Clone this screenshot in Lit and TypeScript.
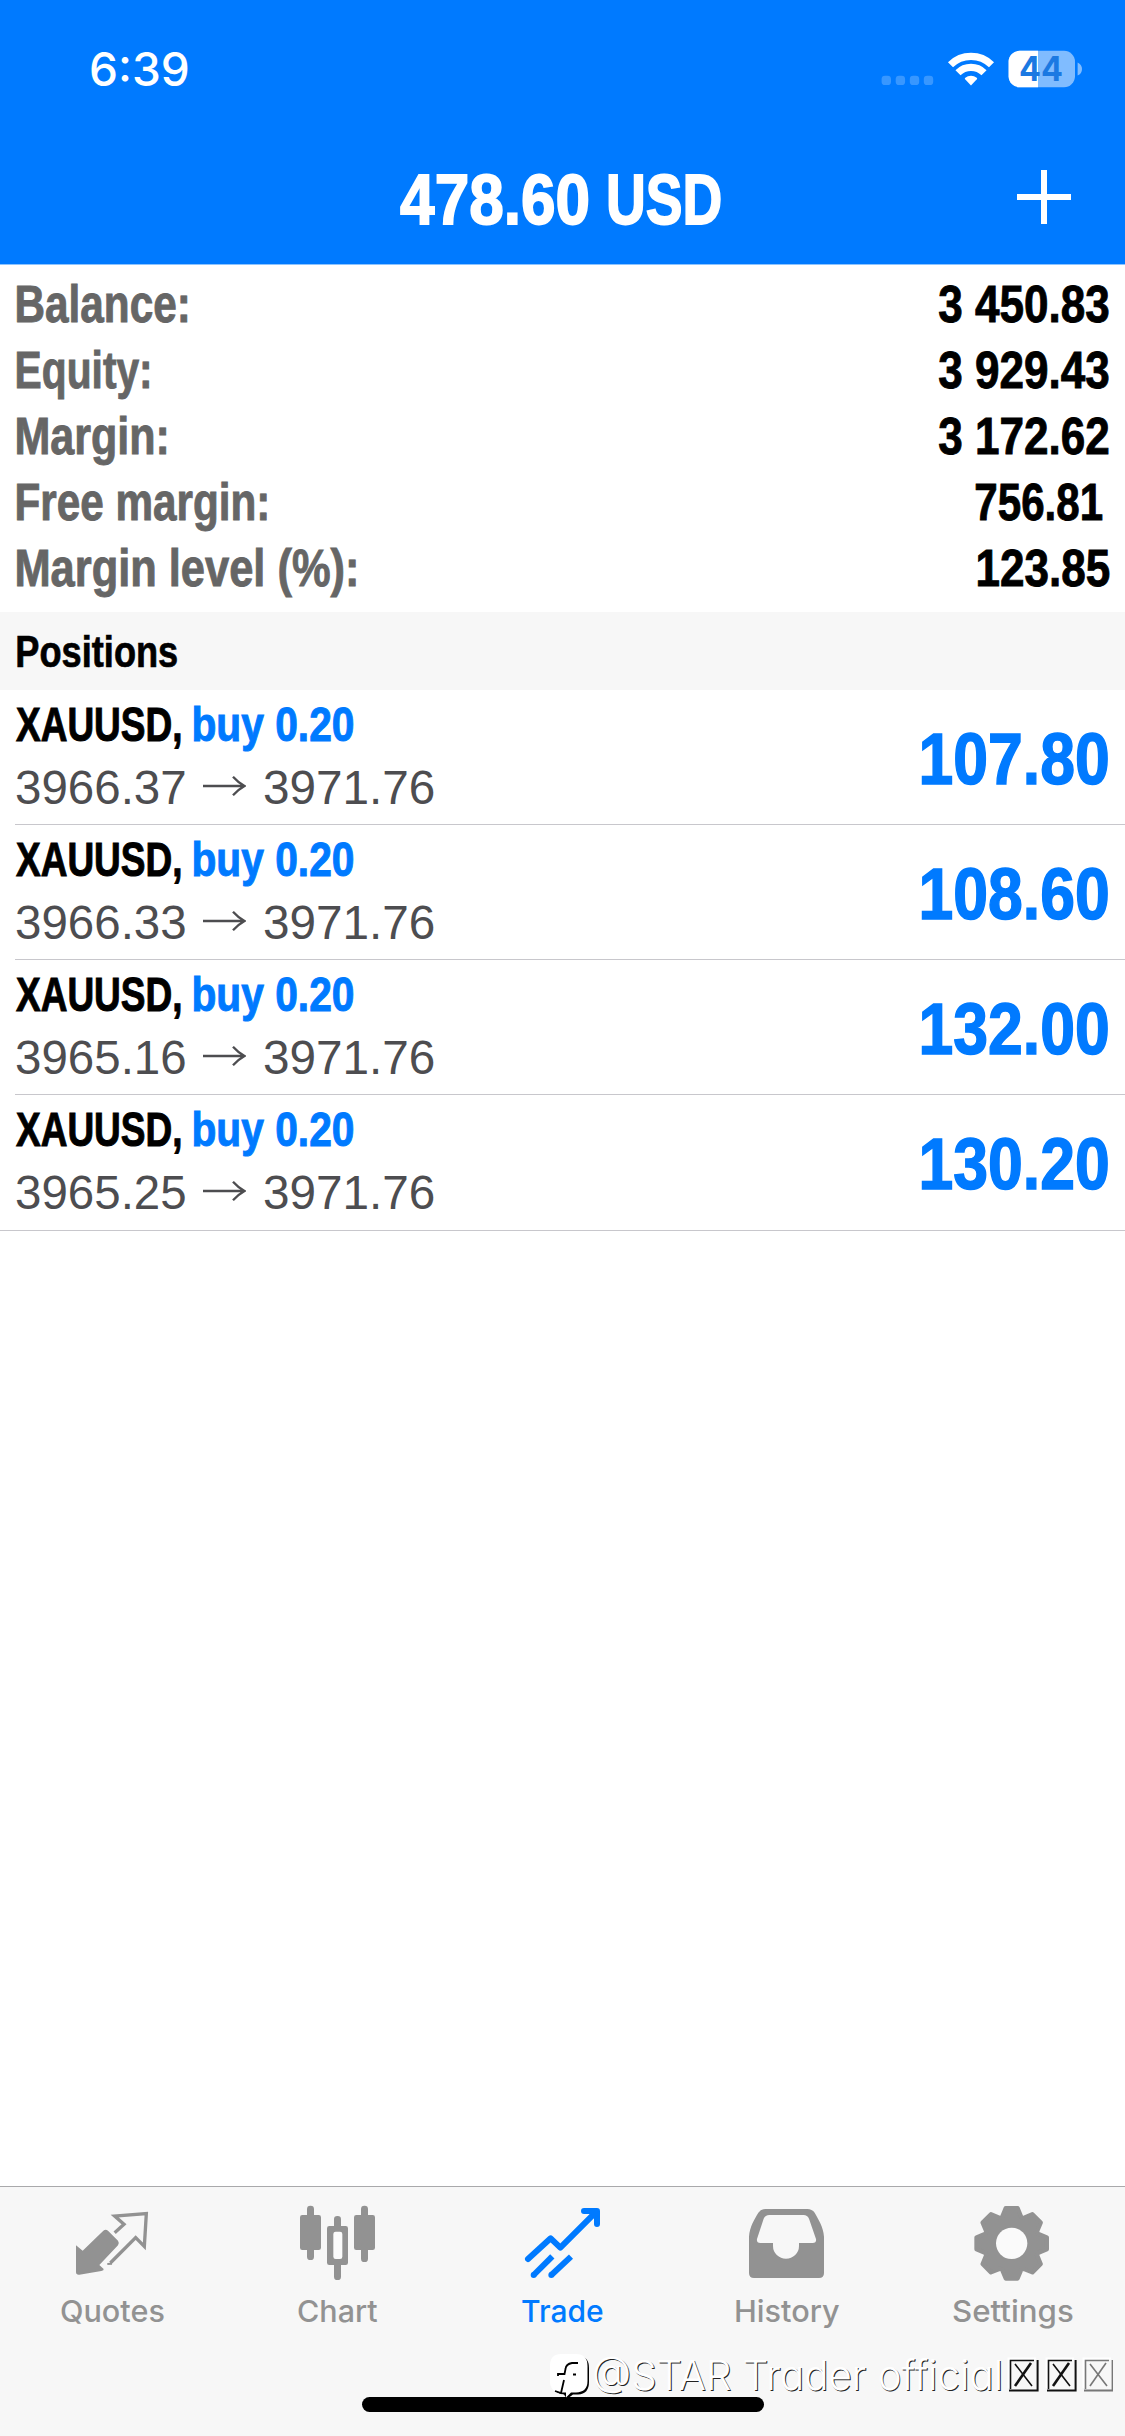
import { LitElement, html, svg, css } from "lit";
import { customElement, property } from "lit/decorators.js";

/** A single run of text, condensed so that its ink spans exactly `w` pixels. */
@customElement("fit-text")
class FitText extends LitElement {
  @property() text = "";
  @property({ type: Number }) w = 100;

  static styles = css`
    :host { display: inline-block; flex: none; white-space: pre; }
    .run { display: inline-block; transform-origin: 0 50%; }
  `;

  updated() {
    const run = this.renderRoot.querySelector(".run") as HTMLElement;
    const cs = getComputedStyle(run);
    const ctx = document.createElement("canvas").getContext("2d")!;
    ctx.font = `${cs.fontWeight} ${cs.fontSize} ${cs.fontFamily}`;
    const m = ctx.measureText(this.text);
    const left = -m.actualBoundingBoxLeft;
    const s = this.w / (m.actualBoundingBoxRight - left);
    run.style.transform = `translateX(${-left * s}px) scaleX(${s})`;
    this.style.width = `${this.w}px`;
  }

  render() {
    return html`<span class="run">${this.text}</span>`;
  }
}

const summary = [
  { label: "Balance:", lw: 170.5, value: "3 450.83", vw: 169.5 },
  { label: "Equity:", lw: 132.5, value: "3 929.43", vw: 169.5 },
  { label: "Margin:", lw: 149.5, value: "3 172.62", vw: 169.5 },
  { label: "Free margin:", lw: 250, value: "756.81", vw: 126, narrow: true },
  { label: "Margin level (%):", lw: 339, value: "123.85", vw: 131 },
];

const positions = [
  { open: "3966.37", now: "3971.76", profit: "107.80" },
  { open: "3966.33", now: "3971.76", profit: "108.60" },
  { open: "3965.16", now: "3971.76", profit: "132.00" },
  { open: "3965.25", now: "3971.76", profit: "130.20" },
];

const gearPath = () => {
  const pts: string[] = [];
  for (let k = 0; k < 8; k++) {
    for (const [r, d] of [[84, -20], [107, -9.5], [107, 9.5], [84, 20]]) {
      const a = ((k * 45 + d) * Math.PI) / 180;
      pts.push(`${(935 + r * Math.sin(a)).toFixed(1)} ${(220 - r * Math.cos(a)).toFixed(1)}`);
    }
  }
  return `M${pts.join("L")}Z`;
};

const tabs = [
  {
    label: "Quotes", w: 102.7, box: "0 78 675 270",
    icon: svg`
      <path fill="currentColor" d="M228 226L248 242L310 182Q317 176 324 182L354 212Q359 219 354 226L298 285L311 297Q312 302 304 303L238 314Q228 315 228 306Z"/>
      <path fill="none" stroke="currentColor" stroke-width="10" d="M344 188L372 163L344 138L439 131L433 229L407 203L331 279"/>
      <path stroke="currentColor" stroke-width="6" d="M322 282L336 281"/>`,
  },
  {
    label: "Chart", w: 79.4, box: "675 78 675 270",
    icon: svg`<g fill="currentColor">
      <rect x="900" y="135" width="63" height="105" rx="7"/><rect x="921" y="107" width="21" height="163" rx="10"/>
      <rect x="1062" y="135" width="63" height="105" rx="7"/><rect x="1083" y="107" width="21" height="169" rx="10"/>
      <rect x="981" y="168" width="63" height="117" rx="7"/><rect x="1002" y="138" width="21" height="192" rx="10"/></g>
      <rect x="1000" y="185" width="27" height="82" rx="7" fill="#fbfbfb"/>`,
  },
  {
    label: "Trade", w: 81, box: "150 78 675 270", active: true,
    icon: svg`<g fill="none" stroke="currentColor" stroke-width="18" stroke-linejoin="round" stroke-linecap="round">
      <path d="M384 267L452 205L481 233L586 128"/><path d="M552 123H591V162"/></g>
      <path fill="currentColor" d="M562 126L590 126V154Z"/>
      <g fill="currentColor"><circle cx="401" cy="315" r="9"/><circle cx="454" cy="315" r="9"/></g>
      <g stroke="currentColor" stroke-width="18"><path d="M401 315L457 259"/><path d="M454 315L513 260"/></g>`,
  },
  {
    label: "History", w: 103.4, box: "-75 78 675 270",
    icon: svg`<path fill="currentColor" fill-rule="evenodd" d="M147 200C149 170 163 148 175 128Q182 117 196 117H322Q336 117 344 128C355 148 370 170 372 200V309Q372 324 357 324H162Q147 324 147 309Z
      M208 135H311Q322 135 327 146L348 207Q350 219 338 219H297V228A39 38 0 0 1 219 228V219H181Q169 219 171 207L191 146Q196 135 208 135Z"/>`,
  },
  {
    label: "Settings", w: 119.6, box: "600 78 675 270",
    icon: svg`<path fill="currentColor" stroke="currentColor" stroke-width="13" stroke-linejoin="round" d=${gearPath()}/>
      <circle cx="935" cy="220" r="47" fill="#fafafa"/>`,
  },
];

@customElement("app-root")
class AppRoot extends LitElement {
  static styles = css`
    :host {
      display: flex; flex-direction: column; position: relative; overflow: hidden;
      width: 1125px; height: 2436px; background: #fff; color: #000;
      font-family: "Liberation Sans", Arial, sans-serif; font-weight: 700;
    }
    svg { display: block; flex: none; }
    .header { height: 264px; background: #007aff; color: #fff; border-bottom: 1px solid #8cc4ff; }
    .status { display: flex; height: 81px; padding: 46px 43px 0 91.4px; }
    .time { font: 500 46px/46px Inter, sans-serif; margin-right: auto; }
    .indicators { margin-top: 4px; }
    .nav { display: grid; grid-template-columns: 1fr auto 1fr; align-items: center; height: 129px; padding: 8px 54px 0 51px; }
    .title { grid-column: 2; display: flex; gap: 20.6px; font-size: 71px; line-height: 72px; -webkit-text-stroke: 1.8px currentColor; }
    .add { justify-self: end; margin-bottom: 5px; }
    .summary { padding: 7px 16.5px 10px 17px; font-size: 51px; line-height: 66px; -webkit-text-stroke: 0.9px currentColor; }
    .row { display: flex; justify-content: space-between; height: 66px; }
    .label { color: #666; }
    .narrow { margin-right: 6.5px; }
    .section { height: 77px; padding: 1px 0 0 17px; background: #f7f7f7; font-size: 44px; line-height: 77px; -webkit-text-stroke: 0.7px currentColor; }
    .position { display: flex; justify-content: space-between; height: 134px; margin-left: 15px; padding-right: 16.6px; border-bottom: 1px solid #c8c7cc; }
    .position.last { height: 135px; margin-left: 0; padding-left: 15px; }
    .info { padding-top: 4px; font-size: 48px; }
    .line { display: flex; height: 62px; line-height: 62px; padding-left: 0.8px; -webkit-text-stroke: 1px currentColor; }
    .symbol { margin-right: 13.7px; }
    .side, .profit { color: #007aff; }
    .line.prices { font-weight: 400; color: #4d4d50; padding-top: 1px; -webkit-text-stroke: 0; }
    .arrow { margin: 0 17.6px 0 18.7px; }
    .profit { font-size: 72px; line-height: 134px; padding-top: 1.5px; height: 130px; -webkit-text-stroke: 1.5px currentColor; }
    .spacer { flex: 1; }
    .tabs { display: grid; grid-template-columns: repeat(5, 1fr); height: 249px; background: #f7f7f7; border-top: 1px solid #a9a9ab; }
    .tab { display: flex; flex-direction: column; align-items: center; padding-top: 9px; color: #929292; font: 500 30px/36px Inter, sans-serif; }
    .tab fit-text { margin-top: 7px; }
    .tab.active { color: #007aff; }
    .home { position: absolute; left: 362px; top: 2397px; width: 402px; height: 15px; border-radius: 8px; background: #000; }
    .mark { position: absolute; left: 550px; top: 2350px; display: flex; height: 50px; color: #fff; font: 300 41px/50px Inter, sans-serif; font-feature-settings: "cv11" 1; text-shadow: 1px 1px 0 #222; }
    .handle { margin: -0.5px 4px 0; }
    .boxes { margin-left: 0; }
  `;

  render() {
    return html`
      <div class="header">
        <div class="status">
          <fit-text class="time" text="6:39" w="96.8"></fit-text>
          <svg class="indicators" width="201" height="38" viewBox="881 50 201 38">
            ${[881.6, 895.7, 909.8, 923.8].map((x) => svg`<rect x=${x} y="75.7" width="9.4" height="9.4" rx="3.4" fill="#fff" fill-opacity=".22"/>`)}
            <g fill="none" stroke="#fff" stroke-width="7.2">
              <path d="M950.5 64.7A29.3 29.3 0 0 1 991.5 64.7"/>
              <path d="M958 72.7A18.4 18.4 0 0 1 984 72.7"/>
            </g>
            <path fill="#fff" d="M971 85.4L964.9 79.1Q964.6 78.3 965.3 77.7A9 9 0 0 1 976.7 77.7Q977.4 78.3 977.1 79.1Z"/>
            <rect x="1008.6" y="50.8" width="66.4" height="36.4" rx="11" fill="#80bcff"/>
            <path fill="#fff" d="M1038 50.8H1019.6A11 11 0 0 0 1008.6 61.8V76.2A11 11 0 0 0 1019.6 87.2H1038Z"/>
            <path fill="#80bcff" d="M1077.6 62.4Q1082 64.5 1082 69T1077.6 75.6Z"/>
            <text x="1019" y="81.3" textLength="44" lengthAdjust="spacingAndGlyphs" font-family="Inter, sans-serif" font-weight="700" font-size="34" fill="#1b79e2">44</text>
          </svg>
        </div>
        <div class="nav">
          <div class="title">
            <fit-text text="478.60" w="187"></fit-text>
            <fit-text text="USD" w="111.5"></fit-text>
          </div>
          <svg class="add" width="54" height="54" viewBox="0 0 54 54"><path stroke="#fff" stroke-width="6" d="M0 27H54M27 0V54"/></svg>
        </div>
      </div>

      <div class="summary">
        ${summary.map((r) => html`<div class="row">
          <fit-text class="label" text=${r.label} w=${r.lw}></fit-text>
          <fit-text class=${r.narrow ? "narrow" : ""} text=${r.value} w=${r.vw}></fit-text>
        </div>`)}
      </div>

      <div class="section"><fit-text text="Positions" w="160"></fit-text></div>

      ${positions.map((p, i) => html`<div class="position ${i === positions.length - 1 ? "last" : ""}">
        <div class="info">
          <div class="line">
            <fit-text class="symbol" text="XAUUSD," w="164.7"></fit-text>
            <fit-text class="side" text="buy 0.20" w="159"></fit-text>
          </div>
          <div class="line prices">
            <fit-text text=${p.open} w="169"></fit-text>
            <svg class="arrow" width="43" height="62" viewBox="0 0 43 62"><path fill="none" stroke="#4d4d50" stroke-width="2.3" d="M0 29H41.5M30 19.8Q34.5 25 41.5 29Q34.5 33 30 38.2"/></svg>
            <fit-text text=${p.now} w="169.7"></fit-text>
          </div>
        </div>
        <fit-text class="profit" text=${p.profit} w="186"></fit-text>
      </div>`)}

      <div class="spacer"></div>

      <div class="tabs">
        ${tabs.map((t) => html`<div class="tab ${t.active ? "active" : ""}">
          <svg width="225" height="90" viewBox=${t.box}>${t.icon}</svg>
          <fit-text text=${t.label} w=${t.w}></fit-text>
        </div>`)}
      </div>

      <div class="home"></div>
      <div class="mark">
        <svg width="40" height="50" viewBox="0 0 40 50">
          <path fill="#000" d="M15 6H28Q39 6 39 18V32Q39 44 28 44.5H23L17 49L14 44.5Q4 43 3 36V18Q3 6 15 6Z"/>
          <path fill="#fff" d="M11 4H26Q37.5 4 37.5 16V31Q37.5 42 26 42.5H21L16 47.5V42.5H11Q0 42 0 31V16Q0 4 11 4Z"/>
          <path fill="none" stroke="#000" stroke-width="1.8" d="M28 13H22Q16 14 15.5 19L14.5 24H8V26M14 30L11 43L5 41"/>
          <path stroke="#000" stroke-width="2" d="M23 24.5H26"/>
        </svg>
        <fit-text class="handle" text="@STAR Trader official" w="403"></fit-text>
        <svg class="boxes" width="112" height="50" viewBox="1001 0 112 50">
          ${[1009, 1047, 1084].map((x, i) => svg`
            <path fill="none" stroke="#fff" stroke-width="2" d="M${x - 0.5} 38V8.5H${x + 27}"/>
            <g fill="none" stroke=${i === 2 ? "#777" : "#111"} stroke-width="1.6">
              <path d="M${x + 1.5} 39V10.5H${x + 25}M${x + 6} 14L${x + 23} 36"/>
              <path stroke-width="2" d="M${x + 28.6} 10V40.4H${x}"/>
              <path stroke-width=${i === 2 ? 1.6 : 2.6} d="M${x + 22} 13L${x + 6} 36"/>
            </g>`)}
        </svg>
      </div>
    `;
  }
}
